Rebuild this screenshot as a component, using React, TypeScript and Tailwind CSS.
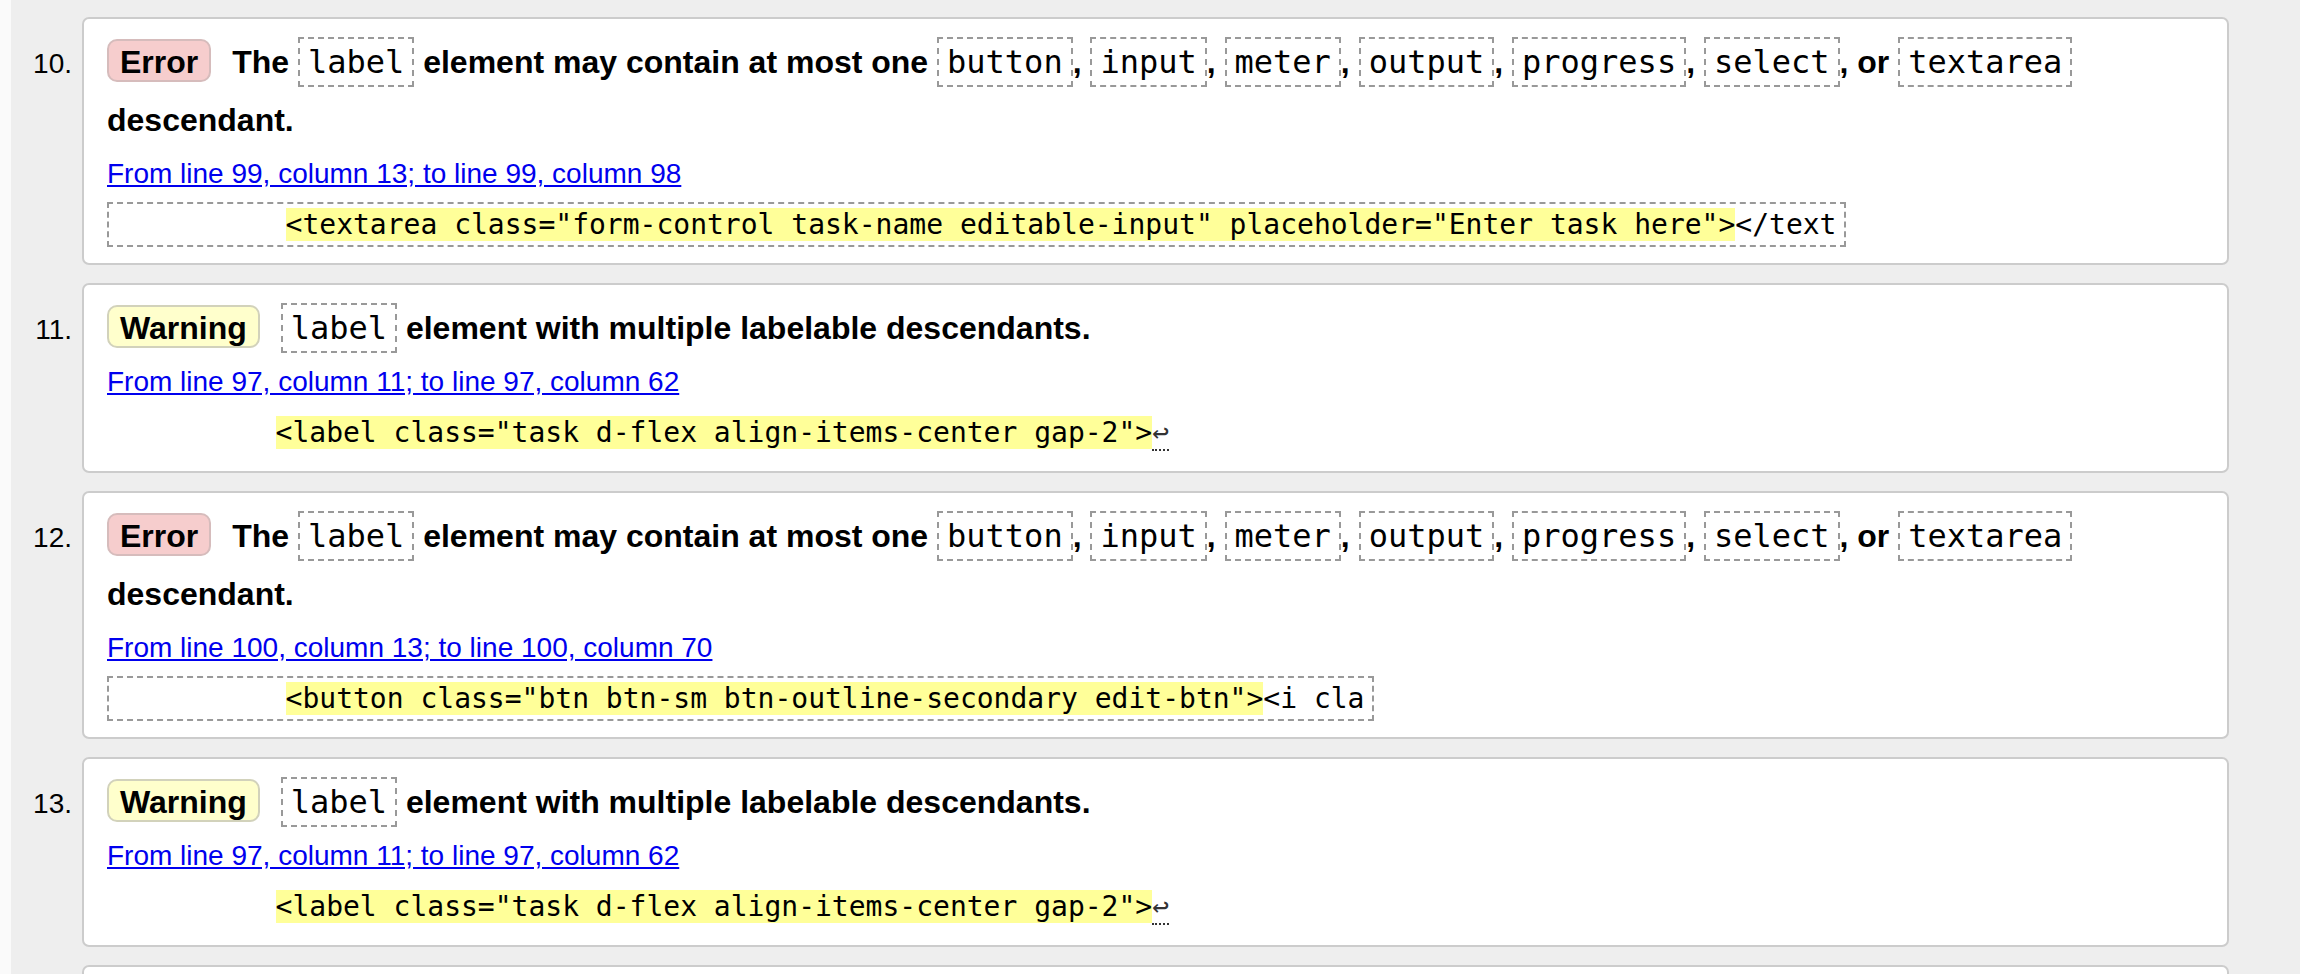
type Kind = 'error' | 'warning';

type Message = {
  n: number;
  kind: Kind;
  from: string;
  hl: string;
  post?: string;
};

const INDENT = '          ';

const messages: Message[] = [
  {
    n: 10,
    kind: 'error',
    from: 'From line 99, column 13; to line 99, column 98',
    hl: '<textarea class="form-control task-name editable-input" placeholder="Enter task here">',
    post: '</text',
  },
  {
    n: 11,
    kind: 'warning',
    from: 'From line 97, column 11; to line 97, column 62',
    hl: '<label class="task d-flex align-items-center gap-2">',
  },
  {
    n: 12,
    kind: 'error',
    from: 'From line 100, column 13; to line 100, column 70',
    hl: '<button class="btn btn-sm btn-outline-secondary edit-btn">',
    post: '<i cla',
  },
  {
    n: 13,
    kind: 'warning',
    from: 'From line 97, column 11; to line 97, column 62',
    hl: '<label class="task d-flex align-items-center gap-2">',
  },
];

function Code({ children }: { children: string }) {
  return (
    <code className="font-['DejaVu_Sans_Mono',monospace] text-[32px] font-normal border-2 border-dashed border-[#999] px-2 py-1">
      {children}
    </code>
  );
}

function Badge({ kind }: { kind: Kind }) {
  return (
    <strong
      className={
        kind === 'error'
          ? 'inline-block mr-3 rounded-[10px] border-2 border-[#d6bcbc] bg-[#f6cdcd] px-[11px] pt-[4px] leading-[35px]'
          : 'inline-block mr-3 rounded-[10px] border-2 border-[#d2d2bb] bg-[#ffffcc] px-[11px] pt-[4px] leading-[35px]'
      }
    >
      {kind === 'error' ? 'Error' : 'Warning'}
    </strong>
  );
}

function Item({ m }: { m: Message }) {
  const isError = m.kind === 'error';
  return (
    <li className="flex items-baseline">
      <span className="w-[61px] shrink-0 text-right text-[28px]">{m.n}.</span>
      <div className="ml-[10px] flex-1 min-w-0 bg-white border-2 border-[#ccc] rounded-[7px] pl-[23px] pr-4 pt-[14px] pb-[16px]">
        <p className="text-[32px] font-bold leading-[58px]">
          <Badge kind={m.kind} />{' '}
          {isError ? (
            <>
              The <Code>label</Code> element may contain at most one <Code>button</Code>, <Code>input</Code>,{' '}
              <Code>meter</Code>, <Code>output</Code>, <Code>progress</Code>, <Code>select</Code>, or{' '}
              <Code>textarea</Code>
              <br />
              descendant.
            </>
          ) : (
            <>
              <Code>label</Code> element with multiple labelable descendants.
            </>
          )}
        </p>
        <p className="mt-[5px] text-[28px] leading-[40px]">
          <a href="#" className="text-[#0000ee] underline">
            {m.from}
          </a>
        </p>
        <code
          className={
            isError
              ? "mt-[8px] block w-fit whitespace-pre border-2 border-dashed border-[#999] px-2 py-1 font-['DejaVu_Sans_Mono',monospace] text-[28px] leading-[33px]"
              : "mt-[8px] block w-fit whitespace-pre border-y-2 border-transparent py-1 font-['DejaVu_Sans_Mono',monospace] text-[28px] leading-[33px]"
          }
        >
          {INDENT}
          <b className="font-normal bg-[#ffff99]">{m.hl}</b>
          {isError ? (
            m.post
          ) : (
            <abbr title="line break" className="no-underline text-[#333] border-b-2 border-dotted border-[#333]">
              ↩
            </abbr>
          )}
        </code>
      </div>
    </li>
  );
}

export default function App() {
  return (
    <div className="flex h-screen overflow-hidden bg-[#eeeeee] font-['Liberation_Sans',Arial,sans-serif] text-black">
      <div className="w-[11px] shrink-0 bg-[#fafafa]" />
      <ol className="flex flex-1 flex-col gap-[18px] pt-[17px] pr-[71px]">
        {messages.map((m) => (
          <Item key={m.n} m={m} />
        ))}
        <li className="ml-[71px] h-[190px] shrink-0 rounded-[7px] border-2 border-[#ccc] bg-white" />
      </ol>
    </div>
  );
}
